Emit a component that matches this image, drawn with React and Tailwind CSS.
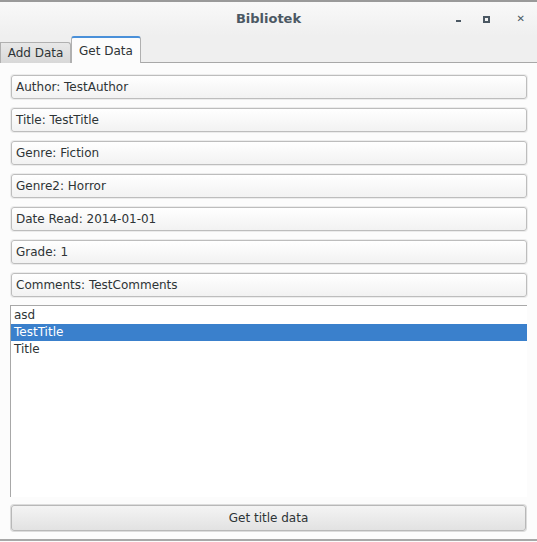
const fields = [
  'Author: TestAuthor',
  'Title: TestTitle',
  'Genre: Fiction',
  'Genre2: Horror',
  'Date Read: 2014-01-01',
  'Grade: 1',
  'Comments: TestComments',
];

const titles = ['asd', 'TestTitle', 'Title'];

export default function App() {
  return (
    <div
      className="w-[537px] h-[542px] overflow-hidden flex flex-col bg-[#fcfcfc] text-[#2e3436]"
      style={{ fontFamily: '"DejaVu Sans", sans-serif' }}
    >
      {/* desktop strip behind window */}
      <div className="h-[2px] bg-[#9a9a9a] shrink-0" />

      {/* Title bar */}
      <div className="h-[34px] shrink-0 relative flex items-center justify-center bg-gradient-to-b from-[#f9f9f9] to-[#efefef]">
        <span className="text-[13px] font-bold text-[#4b5863]">Bibliotek</span>
        <div className="absolute right-0 top-0 h-full flex items-center">
          <span className="w-[5px] h-[2px] bg-[#4b5863] mr-[22px] mt-[4px]" />
          <span className="w-[7px] h-[7px] border-2 border-[#4b5863] mr-[27px]" />
          <span className="text-[10px] font-bold text-[#4b5863] mr-[12px] leading-none">✕</span>
        </div>
      </div>

      {/* Tabs */}
      <div className="h-[27px] shrink-0 flex items-end bg-[#efefef]">
        <div className="h-[21px] w-[71px] flex items-center justify-center text-[12px] border border-b-0 border-[#b0b0b0] rounded-tr-[3px] bg-gradient-to-b from-[#e8e8e8] to-[#d8d8d8]">
          Add Data
        </div>
        <div className="h-[27px] w-[70px] flex items-center justify-center text-[12px] bg-[#fcfcfc] border border-b-0 border-[#b0b0b0] border-t-2 border-t-[#4a90d9] rounded-t-[3px]">
          Get Data
        </div>
        <div className="flex-1 h-px bg-[#a8a8a8]" />
      </div>

      {/* Content */}
      <div className="flex-1 flex flex-col pl-[11px] pr-[10px] pt-[12px]">
        <div className="flex flex-col gap-[9px]">
          {fields.map((f) => (
            <div
              key={f}
              className="h-[24px] flex items-center px-[4px] text-[12px] border border-[#bdbdbd] rounded-[3px] bg-gradient-to-b from-[#ffffff] to-[#f2f2f2] shadow-[0_0_0_1px_#ececec]"
            >
              {f}
            </div>
          ))}
        </div>

        <div className="mt-[8px] h-[192px] border-t border-l border-[#a8a8a8] bg-white text-[12px] pt-[1px] ml-[-1px]">
          {titles.map((t, i) => (
            <div
              key={t}
              className={
                'h-[17px] leading-[17px] pl-[3px] ' +
                (i === 1 ? 'bg-[#3a80cc] text-white' : '')
              }
            >
              {t}
            </div>
          ))}
        </div>

        <div className="mt-[8px] h-[26px] mr-[1px] flex items-center justify-center text-[12px] border border-[#b8b8b8] rounded-[3px] bg-gradient-to-b from-[#f4f4f4] to-[#e2e2e2] shadow-[0_0_0_1px_#dcdcdc]">
          Get title data
        </div>
      </div>
      <div className="h-[2px] shrink-0 bg-[#a8a8a8] mb-[1px]" />
    </div>
  );
}
